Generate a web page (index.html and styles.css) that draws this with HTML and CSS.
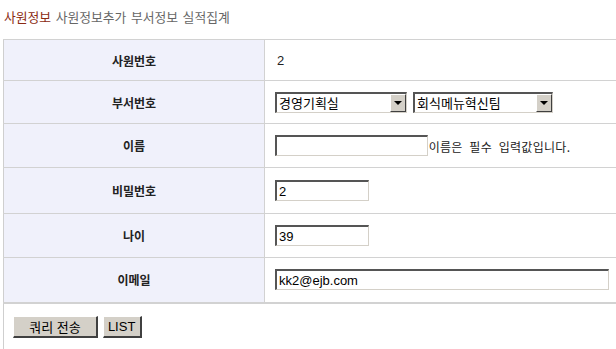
FILE: index.html
```html
<!DOCTYPE html>
<html lang="ko">
<head>
    <meta charset="UTF-8">
    <title>사원정보</title>
    <link rel="stylesheet" href="styles.css">
</head>
<body>

<div class="menu">
    <a href="#" class="current">사원정보</a>
    <a href="#">사원정보추가</a>
    <a href="#">부서정보</a>
    <a href="#">실적집계</a>
</div>

<table class="form-table">
    <tr class="r1">
        <th>사원번호</th>
        <td class="plain">2</td>
    </tr>
    <tr class="r2">
        <th>부서번호</th>
        <td>
            <div class="select-row">
                <div class="select w1"><span class="sel-text">경영기획실</span><span class="arrow"></span></div>
                <div class="select w2"><span class="sel-text">회식메뉴혁신팀</span><span class="arrow"></span></div>
            </div>
        </td>
    </tr>
    <tr class="r3">
        <th>이름</th>
        <td>
            <input type="text" class="txt name-input" value="">
            <span class="hint">이름은 필수 입력값입니다.</span>
        </td>
    </tr>
    <tr class="r4">
        <th>비밀번호</th>
        <td><input type="text" class="txt short" value="2"></td>
    </tr>
    <tr class="r5">
        <th>나이</th>
        <td><input type="text" class="txt short" value="39"></td>
    </tr>
    <tr class="r6 last">
        <th>이메일</th>
        <td><input type="text" class="txt long" value="kk2@ejb.com"></td>
    </tr>
    <tr class="buttons">
        <td colspan="2">
            <button class="btn submit">쿼리 전송</button>
            <button class="btn list">LIST</button>
        </td>
    </tr>
</table>

</body>
</html>
```

FILE: styles.css
```css
body {
    margin: 0;
    padding: 0;
    font-family: "Liberation Sans", "Noto Sans CJK KR", sans-serif;
    font-size: 13px;
    color: #222;
    background: #fff;
}
.menu {
    height: 39px;
    padding: 7px 0 0 4px;
    box-sizing: border-box;
    font-family: "Noto Sans CJK KR", sans-serif;
    font-size: 12.8px;
}
.menu a {
    color: #666;
    text-decoration: none;
    margin-right: 1px;
}
.menu a.current {
    color: #8b2a12;
}
.form-table {
    margin-left: 3px;
    width: 640px;
    border-collapse: collapse;
    border-left: 1px solid #cfcfcf;
}
.form-table th,
.form-table td {
    border-top: 1px solid #d2d2d2;
    padding: 0;
    vertical-align: middle;
}
.form-table th {
    width: 260px;
    background-color: #f0f1fb;
    border-right: 1px solid #d2d2d2;
    font-family: "Noto Sans CJK KR", sans-serif;
    font-size: 12px;
    font-weight: bold;
    color: #222;
    text-align: center;
}
.form-table td {
    padding-left: 10px;
}
.form-table td.plain {
    padding-left: 12px;
    font-size: 13px;
}
.r1 { height: 41px; }
.r2 { height: 43px; }
.r3 { height: 44px; }
.r4 { height: 46px; }
.r5 { height: 44px; }
.r6 { height: 45px; }
.form-table tr.buttons td {
    border-top: 2px solid #d2d2d2;
    height: 46px;
    padding: 0 0 0 9px;
}
.txt {
    box-sizing: border-box;
    height: 21px;
    margin: 0;
    padding: 1px 2px 0;
    border-top: 2px solid #555;
    border-left: 2px solid #555;
    border-bottom: 1px solid #d4d0c8;
    border-right: 1px solid #d4d0c8;
    font-family: "Liberation Sans", sans-serif;
    font-size: 13px;
    color: #000;
    background: #fff;
    vertical-align: middle;
}
.name-input { width: 153px; }
.short { width: 94px; }
.long { width: 334px; }
.hint {
    font-family: "Noto Sans CJK KR", sans-serif;
    font-size: 12px;
    word-spacing: 3px;
    letter-spacing: 0.3px;
    color: #222;
    margin-left: -3px;
    vertical-align: -3px;
}
.select-row {
    display: flex;
    gap: 6px;
}
.select {
    box-sizing: border-box;
    height: 21px;
    display: flex;
    align-items: stretch;
    border-top: 2px solid #555;
    border-left: 2px solid #555;
    border-bottom: 1px solid #d4d0c8;
    border-right: 1px solid #d4d0c8;
    background: #fff;
}
.w1 { width: 132px; }
.w2 { width: 140px; }
.sel-text {
    flex: 1;
    padding-left: 2px;
    font-family: "Noto Sans CJK KR", sans-serif;
    font-size: 13px;
    line-height: 17px;
    color: #000;
    white-space: nowrap;
    overflow: hidden;
}
.arrow {
    width: 16px;
    box-sizing: border-box;
    background: #d4d0c8;
    border-top: 1px solid #fff;
    border-left: 1px solid #fff;
    border-right: 1px solid #404040;
    border-bottom: 1px solid #404040;
    display: flex;
    align-items: center;
    justify-content: center;
}
.arrow::after {
    content: "";
    border-left: 4px solid transparent;
    border-right: 4px solid transparent;
    border-top: 4px solid #000;
    margin-top: 1px;
}
.btn {
    box-sizing: border-box;
    height: 22px;
    margin: 0;
    padding: 0;
    background: #d4d0c8;
    border-top: 1px solid #fff;
    border-left: 1px solid #fff;
    border-right: 2px solid #404040;
    border-bottom: 2px solid #404040;
    font-family: "Liberation Sans", "Noto Sans CJK KR", sans-serif;
    font-size: 13px;
    color: #000;
    vertical-align: middle;
}
.btn.submit {
    width: 85px;
    margin-right: 1px;
}
.btn.list {
    width: 39px;
}
```
